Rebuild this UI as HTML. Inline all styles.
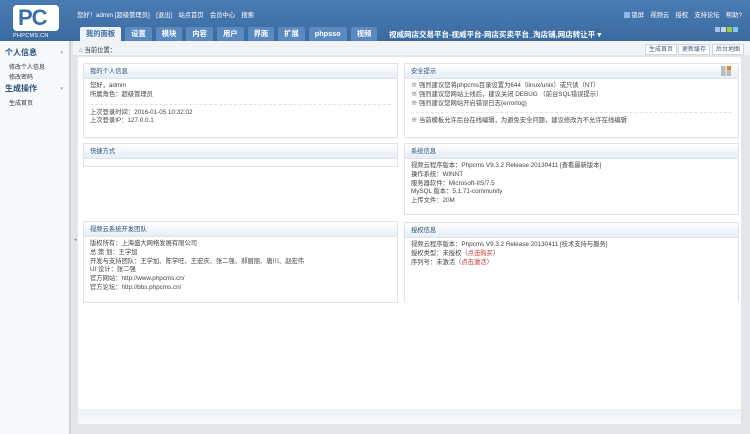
<!DOCTYPE html>
<html><head><meta charset="utf-8"><style>
*{margin:0;padding:0;box-sizing:border-box}
body{width:750px;height:434px;overflow:hidden;font-family:"Liberation Sans","Noto Sans CJK SC",sans-serif;font-size:6px;color:#333;background:#e1e6ea;position:relative}
.hd{position:absolute;left:0;top:0;width:750px;height:41px;background:linear-gradient(#4a7cb3,#3a6aa0)}
.logo{position:absolute;left:13px;top:5px;width:46px;height:26px;background:#fff;border-radius:4px}
.logo span{position:absolute;left:5px;top:2px;font:bold 22px "Liberation Sans",sans-serif;color:#3d6ea5;letter-spacing:-1px;line-height:22px}
.logotxt{position:absolute;left:13px;top:33px;font-size:5.5px;color:#fff;letter-spacing:.3px}
.top{position:absolute;left:77px;top:10px;color:#fff;font-size:6.3px;white-space:nowrap}
.topr{position:absolute;right:8px;top:10px;color:#fff;font-size:6.3px;white-space:nowrap}
.tabs{position:absolute;left:80px;top:27px;height:14px;white-space:nowrap;font-size:0}
.tab{display:inline-block;height:14px;line-height:14px;padding:0 6px;margin-right:4px;background:#5a8ac0;color:#fff;font-weight:bold;font-size:7.3px;border-radius:2px 2px 0 0}
.tab.on{background:#eef3f8;color:#3d6ea5}
.sitet{position:absolute;left:389px;top:29px;color:#fff;font-weight:bold;font-size:7.5px}
.sq{position:absolute;top:27px;width:5px;height:5px}
.side{position:absolute;left:0;top:41px;width:71px;height:393px;background:#f5f9fb;border-right:2px solid #c9d3db}
.side h3{font-size:8px;font-weight:bold;color:#2a4f7a;height:12px;line-height:12px;padding-left:5px;margin-top:6px}
.side p{font-size:6px;padding-left:9px;line-height:10px;color:#333}
.crumb{position:absolute;left:73px;top:41px;width:677px;height:15px;background:#f0f4f7;border-bottom:1px solid #dde4ea}
.crumb span{position:absolute;left:6px;top:4px;font-size:6.3px}
.btn{position:absolute;top:44px;height:11px;line-height:10px;border:1px solid #cfd8e0;background:#fff;font-size:6px;padding:0 3px;color:#3d5a80}
.main{position:absolute;left:78px;top:57px;width:663px;height:352px;background:#fff}
.foot{position:absolute;left:78px;top:409px;width:663px;height:15px;background:linear-gradient(#eef2f5,#f8fafc)}
.p{position:absolute;border:1px solid #dde4ea;background:#fff}
.p .h{height:15px;line-height:15px;padding-left:6px;background:linear-gradient(#ffffff,#e6eef7);border-bottom:1px solid #dde4ea;font-size:6.3px;color:#2a4f7a}
.p .b{padding:3px 6px;line-height:8.8px;font-size:6.3px;color:#444}
.red{color:#c0352d}
.dash{border-top:1px dashed #dde4ea;margin:4px 0}
</style></head><body>
<div class="hd">
<div class="logo"><span>PC</span></div>
<div class="logotxt">PHPCMS.CN</div>
<div class="top">您好！admin [超级管理员]　[退出]　站点首页　会员中心　搜索</div>
<div class="topr"><span style="display:inline-block;width:6px;height:6px;background:#8fb8e8;vertical-align:middle"></span> 锁屏　视频云　授权　支持论坛　帮助?</div>
<div class="tabs"><span class="tab on">我的面板</span><span class="tab">设置</span><span class="tab">模块</span><span class="tab">内容</span><span class="tab">用户</span><span class="tab">界面</span><span class="tab">扩展</span><span class="tab">phpsso</span><span class="tab">视频</span></div>
<div class="sitet">视威网店交易平台-视威平台-网店买卖平台_淘店铺,网店转让平 ▾</div>
<div class="sq" style="left:715px;background:#9cc4ee"></div><div class="sq" style="left:721px;background:#c8d4e0"></div><div class="sq" style="left:727px;background:#9ccc3c"></div><div class="sq" style="left:733px;background:#7ec8e8"></div>
</div>
<div class="side">
<h3>个人信息 <span style="float:right;margin-right:6px;color:#aaa;font-size:5px">▾</span></h3>
<p style="margin-top:4px">修改个人信息</p><p>修改密码</p>
<h3 style="margin-top:0">生成操作 <span style="float:right;margin-right:6px;color:#aaa;font-size:5px">▾</span></h3>
<p style="margin-top:4px">生成首页</p>
</div>
<div style="position:absolute;left:74px;top:237px;font-size:5px;color:#888">◂</div>
<div class="crumb"><span><b style="color:#3d6ea5">⌂</b> 当前位置：</span></div>
<div class="btn" style="left:645px">生成首页</div><div class="btn" style="left:678px">更新缓存</div><div class="btn" style="left:712px">后台地图</div>
<div class="main"></div>
<div class="foot"></div>
<div class="p" style="left:83px;top:63px;width:315px;height:75px"><div class="h">我的个人信息</div><div class="b">您好，admin<br>所属角色：超级管理员<div class="dash"></div>上次登录时间：2016-01-05 10:32:02<br>上次登录IP：127.0.0.1</div></div>
<div class="p" style="left:83px;top:143px;width:315px;height:24px"><div class="h">快捷方式</div></div>
<div class="p" style="left:83px;top:221px;width:315px;height:82px"><div class="h">视频云系统开发团队</div><div class="b">版权所有：上海盛大网络发展有限公司<br>总 策 划：王学加<br>开发与支持团队：王学加、陈学旺、王宏庆、张二强、郝丽丽、唐川、赵宏伟<br>UI 设计：张二强<br>官方网站：http://www.phpcms.cn/<br>官方论坛：http://bbs.phpcms.cn/</div></div>
<div class="p" style="left:404px;top:63px;width:335px;height:75px"><div class="h">安全提示</div><div class="b red">※ 强烈建议您将phpcms目录设置为644（linux/unix）或只读（NT）<br>※ 强烈建议您网站上线后，建议关闭 DEBUG （前台SQL错误提示）<br>※ 强烈建议您网站开启错误日志(errorlog)<div class="dash"></div>※ 当前模板允许后台在线编辑，为避免安全问题，建议修改为不允许在线编辑</div>
<div style="position:absolute;right:7px;top:2px;width:10px;height:10px;background:linear-gradient(90deg,#bbb 45%,transparent 45%,transparent 55%,#bbb 55%)"></div><div style="position:absolute;right:7px;top:2px;width:4px;height:4px;background:#e8823c"></div></div>
<div class="p" style="left:404px;top:143px;width:335px;height:72px"><div class="h">系统信息</div><div class="b">视频云程序版本：Phpcms V9.3.2 Release 20130411 [查看最新版本]<br>操作系统：WINNT<br>服务器软件：Microsoft-IIS/7.5<br>MySQL 版本：5.1.71-community<br>上传文件：20M</div></div>
<div class="p" style="left:404px;top:222px;width:335px;height:80px;border-bottom:none"><div class="h">授权信息</div><div class="b">视频云程序版本：Phpcms V9.3.2 Release 20130411 [技术支持与服务]<br>授权类型：未授权（<span class="red">点击购买</span>）<br>序列号：未激活（<span class="red">点击激活</span>）</div></div>
</body></html>
